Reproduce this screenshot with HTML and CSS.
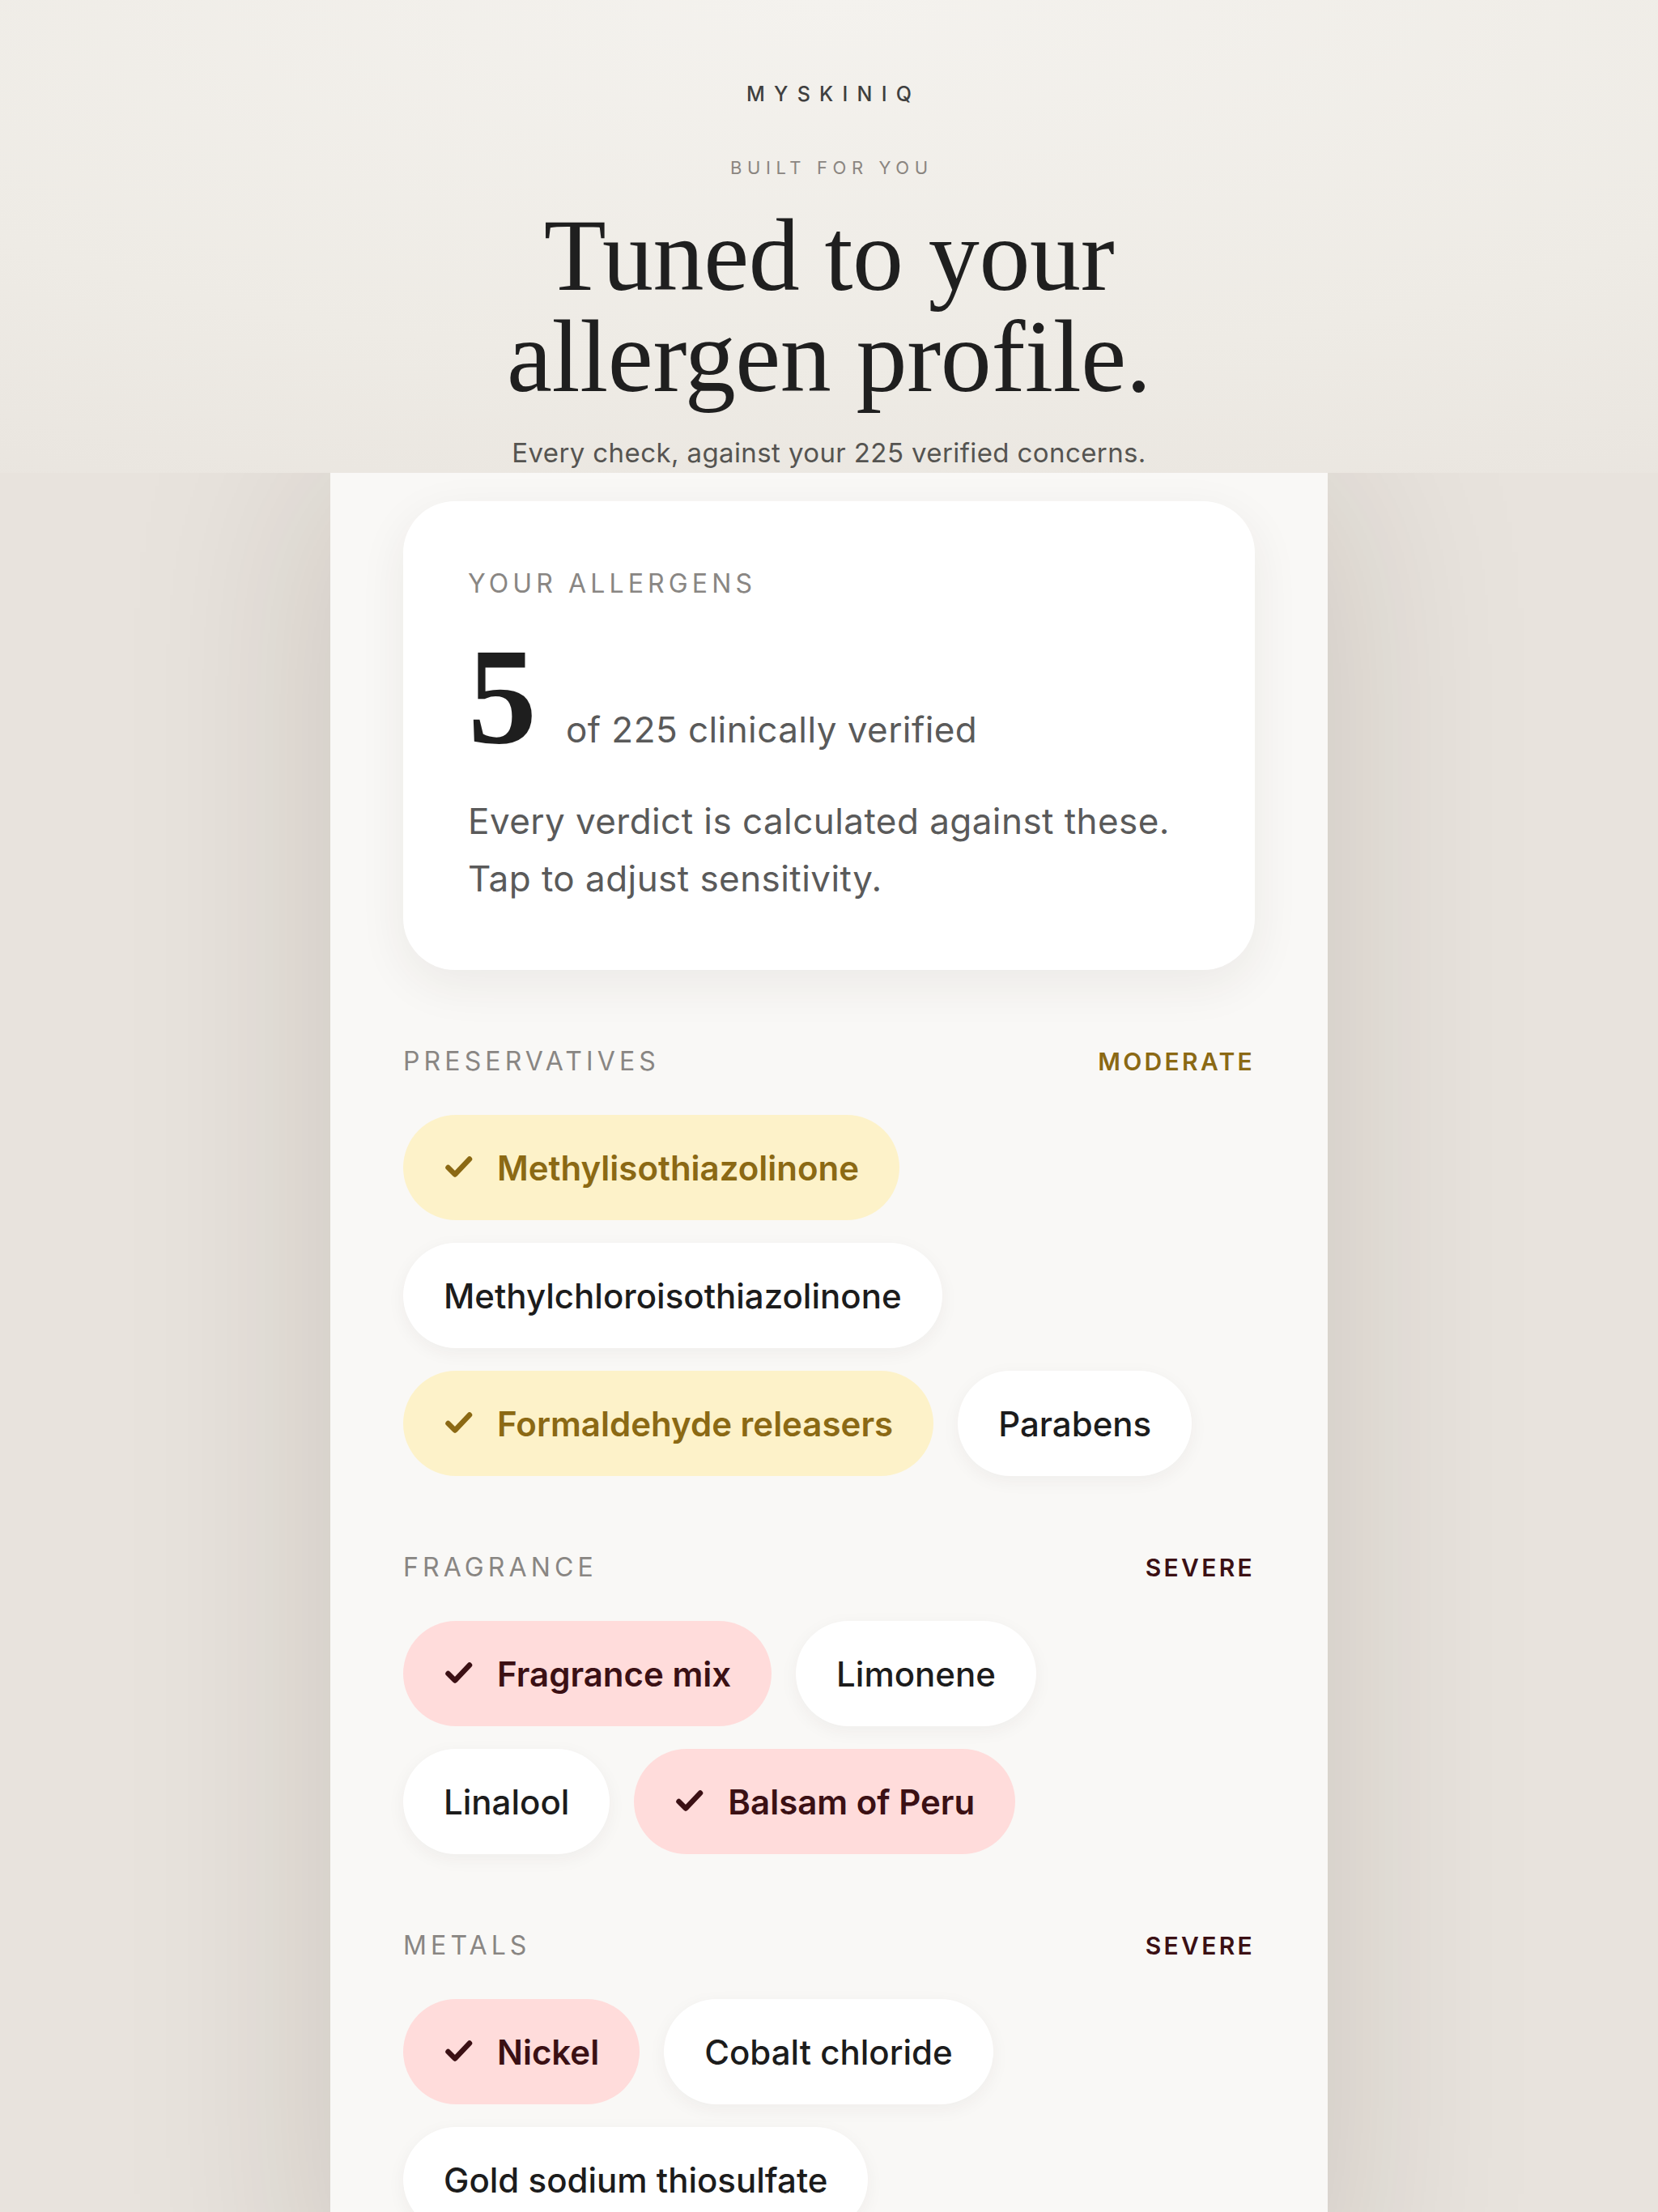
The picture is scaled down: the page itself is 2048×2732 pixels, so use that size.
FILE: index.html
```html
<!DOCTYPE html>
<html lang="en">
<head>
<meta charset="utf-8">
<title>MySkinIQ – Allergen profile</title>
<link rel="stylesheet" href="styles.css">
</head>
<body>
<header class="hero">
  <div class="brand">MYSKINIQ</div>
  <div class="eyebrow">BUILT FOR YOU</div>
  <h1 class="title">Tuned to your<br>allergen profile.</h1>
  <p class="subtitle">Every check, against your 225 verified concerns.</p>
</header>

<main class="panel">
  <section class="summary">
    <div class="label">YOUR ALLERGENS</div>
    <div class="count-row">
      <span class="count">5</span>
      <span class="count-of">of 225 clinically verified</span>
    </div>
    <p class="summary-text">Every verdict is calculated against these.<br>Tap to adjust sensitivity.</p>
  </section>

  <section class="group">
    <div class="group-head">
      <span class="label">PRESERVATIVES</span>
      <span class="level level-moderate">MODERATE</span>
    </div>
    <div class="chips">
      <span class="chip chip-moderate"><svg class="check" viewBox="0 0 36 36"><polyline points="5.5,18 14,26.5 32,7.5"/></svg>Methylisothiazolinone</span>
      <span class="chip">Methylchloroisothiazolinone</span>
      <span class="chip chip-moderate"><svg class="check" viewBox="0 0 36 36"><polyline points="5.5,18 14,26.5 32,7.5"/></svg>Formaldehyde releasers</span>
      <span class="chip">Parabens</span>
    </div>
  </section>

  <section class="group">
    <div class="group-head">
      <span class="label">FRAGRANCE</span>
      <span class="level level-severe">SEVERE</span>
    </div>
    <div class="chips">
      <span class="chip chip-severe"><svg class="check" viewBox="0 0 36 36"><polyline points="5.5,18 14,26.5 32,7.5"/></svg>Fragrance mix</span>
      <span class="chip">Limonene</span>
      <span class="chip">Linalool</span>
      <span class="chip chip-severe"><svg class="check" viewBox="0 0 36 36"><polyline points="5.5,18 14,26.5 32,7.5"/></svg>Balsam of Peru</span>
    </div>
  </section>

  <section class="group">
    <div class="group-head">
      <span class="label">METALS</span>
      <span class="level level-severe">SEVERE</span>
    </div>
    <div class="chips">
      <span class="chip chip-severe"><svg class="check" viewBox="0 0 36 36"><polyline points="5.5,18 14,26.5 32,7.5"/></svg>Nickel</span>
      <span class="chip">Cobalt chloride</span>
      <span class="chip">Gold sodium thiosulfate</span>
    </div>
  </section>
</main>
</body>
</html>
```

FILE: styles.css
```css
* { box-sizing: border-box; }

html, body {
  margin: 0;
  padding: 0;
}

body {
  background: #e8e3dd;
  font-family: Inter, "Noto Sans", "Liberation Sans", sans-serif;
  color: #1c1c1c;
}

.hero {
  position: relative;
  z-index: 1;
  height: 584px;
  padding-top: 101px;
  text-align: center;
  background: radial-gradient(ellipse 120% 140% at 50% 0%, #f4f2ee 0%, #eeebe5 55%, #e7e2dc 100%);
}

.brand {
  font-size: 25px;
  line-height: 30px;
  font-weight: 500;
  letter-spacing: 0.45em;
  text-indent: 0.45em;
  color: #3f3f3f;
}

.eyebrow {
  margin-top: 62px;
  font-size: 22px;
  line-height: 28px;
  font-weight: 400;
  letter-spacing: 0.3em;
  text-indent: 0.3em;
  color: #8a8580;
}

.title {
  margin: 32px 0 0;
  font-family: "Liberation Serif", "Times New Roman", serif;
  font-weight: 400;
  font-size: 126px;
  line-height: 125px;
  letter-spacing: -0.003em;
  color: #1f1f1f;
}

.subtitle {
  margin: 36px 0 0;
  font-size: 33px;
  line-height: 40px;
  letter-spacing: 0.012em;
  color: #555451;
}

.panel {
  width: 1232px;
  margin: 0 auto;
  min-height: 2200px;
  padding: 35px 90px 120px;
  background: #f9f8f6;
  box-shadow: 0 0 240px rgba(40, 25, 10, 0.15);
}

.summary {
  background: #ffffff;
  border-radius: 64px;
  padding: 80px 80px 77px;
  box-shadow: 0 18px 60px rgba(60, 45, 30, 0.07);
}

.label {
  font-size: 32px;
  line-height: 44px;
  letter-spacing: 0.16em;
  color: #898683;
}

.count-row {
  display: flex;
  align-items: baseline;
  gap: 36px;
  margin-top: 32px;
}

.count {
  font-family: "Liberation Serif", "Times New Roman", serif;
  font-weight: 700;
  font-size: 170px;
  line-height: 170px;
  color: #1e1e1e;
}

.count-of {
  font-size: 44px;
  line-height: 71px;
  letter-spacing: 0.01em;
  color: #5a5a5a;
}

.summary-text {
  margin: 34px 0 0;
  font-size: 44px;
  line-height: 71px;
  letter-spacing: 0.01em;
  color: #5a5a5a;
}

.group {
  margin-top: 91px;
}

.group-head {
  display: flex;
  justify-content: space-between;
  align-items: baseline;
}

.level {
  font-size: 30px;
  line-height: 44px;
  font-weight: 600;
  letter-spacing: 0.11em;
}

.level-moderate { color: #8b6914; }
.level-severe { color: #3b1014; }

.chips {
  display: flex;
  flex-wrap: wrap;
  gap: 28px 30px;
  margin-top: 44px;
}

.chip {
  display: inline-flex;
  align-items: center;
  height: 130px;
  padding: 0 50px;
  border-radius: 65px;
  background: #ffffff;
  font-size: 42px;
  font-weight: 500;
  color: #1c1c1c;
  box-shadow: 0 6px 22px rgba(60, 45, 30, 0.05);
}

.chip-moderate {
  background: #fdf2c9;
  color: #8b6914;
  font-weight: 600;
  box-shadow: none;
}

.chip-severe {
  background: #ffdcdb;
  color: #3b1014;
  font-weight: 600;
  box-shadow: none;
}

.check {
  width: 36px;
  height: 36px;
  margin-right: 30px;
  flex: none;
}

.check polyline {
  fill: none;
  stroke: currentColor;
  stroke-width: 6.5;
  stroke-linecap: round;
  stroke-linejoin: round;
}
```
